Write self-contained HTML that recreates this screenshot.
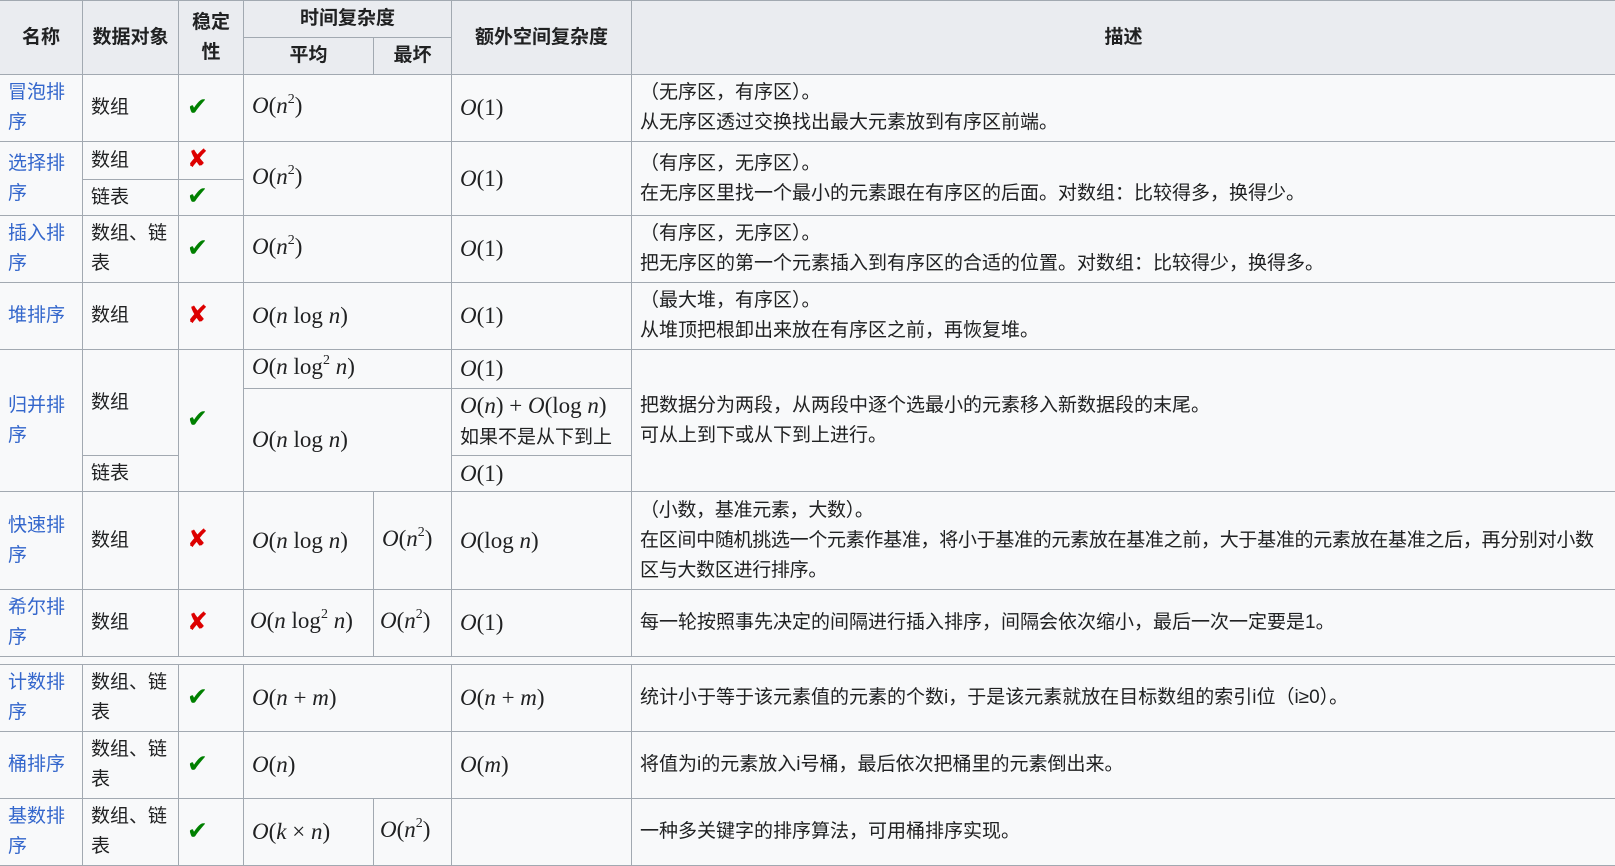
<!DOCTYPE html>
<html><head><meta charset="utf-8"><style>
html,body{margin:0;padding:0;background:#fff;}
body{width:1615px;height:865px;overflow:hidden;}
table{border-collapse:collapse;table-layout:fixed;width:1616px;background:#f8f9fa;color:#202122;
font-family:"Liberation Sans","Noto Sans CJK SC",sans-serif;font-size:19px;line-height:30px;margin:0 0 0 -1px;}
td,th{border:1px solid #a2a9b1;padding:0 8px;vertical-align:middle;text-align:left;overflow:hidden;}
th{background:#eaecf0;font-weight:bold;text-align:center;padding:0 4px;}
a{color:#3366cc;text-decoration:none;}
.m{font-family:"Liberation Serif","DejaVu Serif",serif;font-size:23px;}
.m i{font-style:italic;}
.m sup{font-size:14px;vertical-align:0;position:relative;top:-10px;}
.ok{color:#008000;font-family:"DejaVu Sans",sans-serif;font-size:25px;font-weight:bold;}
.no{color:#dd0000;font-family:"DejaVu Sans",sans-serif;font-size:25px;font-weight:bold;}
.gap td{border-left:none;border-right:none;background:#f8f9fa;padding:0;}
</style></head><body>
<table>
<colgroup><col style="width:83px"><col style="width:96px"><col style="width:65px"><col style="width:130px"><col style="width:78px"><col style="width:180px"><col style="width:984px"></colgroup>
<tr style="height:37px"><th rowspan="2">名称</th><th rowspan="2">数据对象</th><th rowspan="2">稳定<br>性</th><th colspan="2">时间复杂度</th><th rowspan="2">额外空间复杂度</th><th rowspan="2">描述</th></tr>
<tr style="height:37px"><th>平均</th><th>最坏</th></tr>
<tr style="height:67px"><td><a>冒泡排<br>序</a></td><td>数组</td><td><span class="ok">✔</span></td><td colspan="2" class="m"><i>O</i>(<i>n</i><sup>2</sup>)</td><td class="m"><i>O</i>(1)</td><td>（无序区，有序区）。<br>从无序区透过交换找出最大元素放到有序区前端。</td></tr>
<tr style="height:38px"><td rowspan="2"><a>选择排<br>序</a></td><td>数组</td><td><span class="no">✘</span></td><td colspan="2" rowspan="2" class="m"><i>O</i>(<i>n</i><sup>2</sup>)</td><td rowspan="2" class="m"><i>O</i>(1)</td><td rowspan="2">（有序区，无序区）。<br>在无序区里找一个最小的元素跟在有序区的后面。对数组：比较得多，换得少。</td></tr>
<tr style="height:36px"><td>链表</td><td><span class="ok">✔</span></td></tr>
<tr style="height:67px"><td><a>插入排<br>序</a></td><td>数组、链<br>表</td><td><span class="ok">✔</span></td><td colspan="2" class="m"><i>O</i>(<i>n</i><sup>2</sup>)</td><td class="m"><i>O</i>(1)</td><td>（有序区，无序区）。<br>把无序区的第一个元素插入到有序区的合适的位置。对数组：比较得少，换得多。</td></tr>
<tr style="height:67px"><td><a>堆排序</a></td><td>数组</td><td><span class="no">✘</span></td><td colspan="2" class="m"><i>O</i>(<i>n</i> log <i>n</i>)</td><td class="m"><i>O</i>(1)</td><td>（最大堆，有序区）。<br>从堆顶把根卸出来放在有序区之前，再恢复堆。</td></tr>
<tr style="height:39px"><td rowspan="3"><a>归并排<br>序</a></td><td rowspan="2">数组</td><td rowspan="3"><span class="ok">✔</span></td><td colspan="2" class="m"><i>O</i>(<i>n</i> log<sup>2</sup> <i>n</i>)</td><td class="m"><i>O</i>(1)</td><td rowspan="3">把数据分为两段，从两段中逐个选最小的元素移入新数据段的末尾。<br>可从上到下或从下到上进行。</td></tr>
<tr style="height:67px"><td colspan="2" rowspan="2" class="m"><i>O</i>(<i>n</i> log <i>n</i>)</td><td><span class="m"><i>O</i>(<i>n</i>) + <i>O</i>(log <i>n</i>)</span><br>如果不是从下到上</td></tr>
<tr style="height:36px"><td>链表</td><td class="m"><i>O</i>(1)</td></tr>
<tr style="height:98px"><td><a>快速排<br>序</a></td><td>数组</td><td><span class="no">✘</span></td><td class="m"><i>O</i>(<i>n</i> log <i>n</i>)</td><td class="m"><i>O</i>(<i>n</i><sup>2</sup>)</td><td class="m"><i>O</i>(log <i>n</i>)</td><td style="white-space:nowrap;letter-spacing:-0.3px">（小数，基准元素，大数）。<br>在区间中随机挑选一个元素作基准，将小于基准的元素放在基准之前，大于基准的元素放在基准之后，再分别对小数<br>区与大数区进行排序。</td></tr>
<tr style="height:67px"><td><a>希尔排<br>序</a></td><td>数组</td><td><span class="no">✘</span></td><td class="m" style="white-space:nowrap;padding:0 6px"><i>O</i>(<i>n</i> log<sup>2</sup> <i>n</i>)</td><td class="m" style="padding:0 6px"><i>O</i>(<i>n</i><sup>2</sup>)</td><td class="m"><i>O</i>(1)</td><td>每一轮按照事先决定的间隔进行插入排序，间隔会依次缩小，最后一次一定要是1。</td></tr>
<tr class="gap" style="height:8px"><td colspan="7"></td></tr>
<tr style="height:67px"><td><a>计数排<br>序</a></td><td>数组、链<br>表</td><td><span class="ok">✔</span></td><td colspan="2" class="m"><i>O</i>(<i>n</i> + <i>m</i>)</td><td class="m"><i>O</i>(<i>n</i> + <i>m</i>)</td><td>统计小于等于该元素值的元素的个数i，于是该元素就放在目标数组的索引i位（i≥0）。</td></tr>
<tr style="height:67px"><td><a>桶排序</a></td><td>数组、链<br>表</td><td><span class="ok">✔</span></td><td colspan="2" class="m"><i>O</i>(<i>n</i>)</td><td class="m"><i>O</i>(<i>m</i>)</td><td>将值为i的元素放入i号桶，最后依次把桶里的元素倒出来。</td></tr>
<tr style="height:67px"><td><a>基数排<br>序</a></td><td>数组、链<br>表</td><td><span class="ok">✔</span></td><td class="m"><i>O</i>(<i>k</i> × <i>n</i>)</td><td class="m" style="padding:0 6px"><i>O</i>(<i>n</i><sup>2</sup>)</td><td></td><td>一种多关键字的排序算法，可用桶排序实现。</td></tr>
</table>
</body></html>
